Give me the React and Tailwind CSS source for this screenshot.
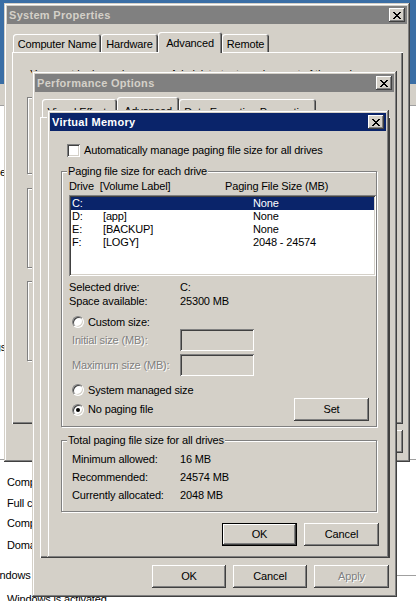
import React from "react";

const FONT = "font-['Liberation_Sans',Arial,sans-serif]";
const RAISED_WIN =
  "shadow-[inset_-1px_-1px_0_#404040,inset_1px_1px_0_#d4d0c8,inset_-2px_-2px_0_#808080,inset_2px_2px_0_#ffffff]";
const RAISED_BTN =
  "shadow-[inset_-1px_-1px_0_#404040,inset_1px_1px_0_#ffffff,inset_-2px_-2px_0_#808080]";
const SUNKEN =
  "shadow-[inset_1px_1px_0_#808080,inset_-1px_-1px_0_#ffffff,inset_2px_2px_0_#404040,inset_-2px_-2px_0_#d4d0c8]";
const PANEL =
  "shadow-[inset_1px_1px_0_#ffffff,inset_-1px_-1px_0_#404040,inset_-2px_-2px_0_#808080]";
const TAB =
  "shadow-[inset_1px_1px_0_#ffffff,inset_-1px_0_0_#404040,inset_-2px_0_0_#808080]";
const ETCHED =
  "border border-[#808080] shadow-[1px_1px_0_#ffffff,inset_1px_1px_0_#ffffff]";
const DISABLED = "text-[#808080] [text-shadow:1px_1px_0_#ffffff]";


function CloseButton() {
  return (
    <div className={`flex h-[14px] w-[16px] items-center justify-center bg-[#d4d0c8] ${RAISED_BTN}`}>
      <svg width="8" height="7" viewBox="0 0 8 7" shapeRendering="crispEdges">
        <path
          d="M0 0h2v1H0zM6 0h2v1H6zM1 1h2v1H1zM5 1h2v1H5zM2 2h4v1H2zM3 3h2v1H3zM2 4h4v1H2zM1 5h2v1H1zM5 5h2v1H5zM0 6h2v1H0zM6 6h2v1H6z"
          fill="#000"
        />
      </svg>
    </div>
  );
}


function Window({ title, active, className, children }) {
  return (
    <div className={`absolute flex flex-col bg-[#d4d0c8] p-[3px] ${RAISED_WIN} ${className}`}>
      <div
        className={`flex h-[18px] shrink-0 items-center justify-between pl-[2px] pr-[2px] ${
          active ? "bg-[#0a246a] text-white" : "bg-[#808080] text-[#d4d0c8]"
        }`}
      >
        <span className="text-[11px] font-bold leading-[13px] tracking-[0.3px]">{title}</span>
        <CloseButton />
      </div>
      {children}
    </div>
  );
}


// selPad / pad push the tab caption down inside the tab
function Tabs({ tabs, className, selPad, pad }) {
  return (
    <div className={`relative z-10 flex items-end ${className}`}>
      {tabs.map((tab) =>
        tab.active ? (
          <div
            key={tab.label}
            className={`-mb-px flex h-[21px] items-start justify-center rounded-t-[3px] bg-[#d4d0c8] ${selPad} ${TAB} ${tab.w}`}
          >
            {tab.label}
          </div>
        ) : (
          <div
            key={tab.label}
            className={`flex h-[18px] items-start justify-center overflow-hidden rounded-t-[3px] ${pad} ${TAB} ${tab.w}`}
          >
            {tab.label}
          </div>
        )
      )}
    </div>
  );
}


function Button({ children, isDefault, disabled, className = "" }) {
  return (
    <div
      className={`flex h-[23px] items-center justify-center bg-[#d4d0c8] ${
        isDefault ? "border border-black" : ""
      } ${RAISED_BTN} ${disabled ? DISABLED : ""} ${className}`}
    >
      {children}
    </div>
  );
}


function Radio({ checked }) {
  return (
    <span className="flex h-[12px] w-[12px] shrink-0 items-center justify-center rounded-full border border-t-[#808080] border-l-[#808080] border-r-white border-b-white bg-white shadow-[inset_1px_1px_0_#404040,inset_-1px_-1px_0_#d4d0c8]">
      {checked && <span className="h-[4px] w-[4px] rounded-full bg-black" />}
    </span>
  );
}


function Group({ label, className, children }) {
  return (
    <fieldset className={`${ETCHED} ${className}`}>
      <legend className="ml-[5px] bg-[#d4d0c8] px-[1px] leading-[13px]">{label}</legend>
      {children}
    </fieldset>
  );
}


const drives = [
  { drive: "C:", label: "", size: "None", selected: true },
  { drive: "D:", label: "[app]", size: "None" },
  { drive: "E:", label: "[BACKUP]", size: "None" },
  { drive: "F:", label: "[LOGY]", size: "2048 - 24574" },
];


function VirtualMemory() {
  return (
    <Window title="Virtual Memory" active className="left-[47px] top-[110px] z-30 h-[448px] w-[342px]">

      <div className="ml-[17px] mt-[13px] flex h-[13px] items-center gap-[4px]">
        <span className={`h-[13px] w-[13px] bg-white ${SUNKEN}`} />
        <span>Automatically manage paging file size for all drives</span>
      </div>

      <Group label="Paging file size for each drive" className="ml-[11px] mt-[8px] w-[316px] pb-[5px]">
        <div className="flex flex-col">

          <div className="ml-[7px] mt-[2px] flex h-[13px] items-center">
            <span className="w-[156px]">Drive&nbsp;&nbsp;[Volume Label]</span>
            <span>Paging File Size (MB)</span>
          </div>

          <div className={`ml-[7px] mt-[2px] h-[81px] w-[307px] bg-white p-[2px] ${SUNKEN}`}>
            {drives.map((d) => (
              <div
                key={d.drive}
                className={`flex h-[13px] items-center pl-[1px] ${
                  d.selected ? "bg-[#0a246a] text-white" : "text-black"
                }`}
              >
                <span className="w-[31px]">{d.drive}</span>
                <span className="w-[150px]">{d.label}</span>
                <span>{d.size}</span>
              </div>
            ))}
          </div>

          <div className="ml-[7px] mt-[4px] flex h-[14px] items-center">
            <span className="w-[111px]">Selected drive:</span>
            <span>C:</span>
          </div>
          <div className="ml-[7px] flex h-[14px] items-center">
            <span className="w-[111px]">Space available:</span>
            <span>25300 MB</span>
          </div>

          <div className="ml-[10px] mt-[7px] flex h-[14px] items-center gap-[4px]">
            <Radio />
            <span>Custom size:</span>
          </div>
          <div className="ml-[10px] flex h-[22px] items-center">
            <span className={`w-[108px] ${DISABLED}`}>Initial size (MB):</span>
            <span className={`h-[22px] w-[74px] bg-[#d4d0c8] ${SUNKEN}`} />
          </div>
          <div className="ml-[10px] mt-[3px] flex h-[22px] items-center">
            <span className={`w-[108px] ${DISABLED}`}>Maximum size (MB):</span>
            <span className={`h-[22px] w-[74px] bg-[#d4d0c8] ${SUNKEN}`} />
          </div>

          <div className="ml-[10px] mt-[7px] flex h-[14px] items-center gap-[4px]">
            <Radio />
            <span>System managed size</span>
          </div>
          <div className="ml-[10px] mr-[7px] mt-[1px] flex h-[23px] items-center justify-between">
            <div className="flex items-center gap-[4px]">
              <Radio checked />
              <span>No paging file</span>
            </div>
            <Button className="w-[75px]">Set</Button>
          </div>

        </div>
      </Group>

      <Group label="Total paging file size for all drives" className="ml-[11px] mt-[7px] w-[316px] pb-[7px]">
        <div className="ml-[10px] mt-[3px] flex flex-col">
          <div className="flex h-[18px] items-center">
            <span className="w-[108px]">Minimum allowed:</span>
            <span>16 MB</span>
          </div>
          <div className="flex h-[18px] items-center">
            <span className="w-[108px]">Recommended:</span>
            <span>24574 MB</span>
          </div>
          <div className="flex h-[18px] items-center">
            <span className="w-[108px]">Currently allocated:</span>
            <span>2048 MB</span>
          </div>
        </div>
      </Group>

      <div className="mr-[7px] mt-[11px] flex justify-end gap-[7px]">
        <Button isDefault className="w-[75px]">OK</Button>
        <Button className="w-[75px]">Cancel</Button>
      </div>

    </Window>
  );
}


function PerformanceOptions() {
  return (
    <Window title="Performance Options" className="left-[32px] top-[71px] z-20 h-[526px] w-[365px]">
      <Tabs
        className="ml-[7px] mt-[5px]"
        selPad="pt-[6px]"
        pad="pt-[5px]"
        tabs={[
          { label: "Visual Effects", w: "w-[75px]" },
          { label: "Advanced", w: "w-[62px]", active: true },
          { label: "Data Execution Prevention", w: "w-[137px]" },
        ]}
      />
      <div className={`ml-[5px] h-[441px] w-[350px] bg-[#d4d0c8] ${PANEL}`} />
      <div className="mr-[5px] mt-[7px] flex justify-end gap-[7px]">
        <Button className="w-[74px]">OK</Button>
        <Button className="w-[74px]">Cancel</Button>
        <Button disabled className="w-[75px]">Apply</Button>
      </div>
    </Window>
  );
}


function SystemProperties() {
  return (
    <Window title="System Properties" className="left-[4px] top-[3px] z-10 h-[459px] w-[406px]">
      <Tabs
        className="ml-[6px] mt-[8px]"
        selPad="pt-[3px]"
        pad="pt-[2px]"
        tabs={[
          { label: "Computer Name", w: "w-[88px]" },
          { label: "Hardware", w: "w-[57px]" },
          { label: "Advanced", w: "w-[64px]", active: true },
          { label: "Remote", w: "w-[47px]" },
        ]}
      />
      <div className={`ml-[5px] flex h-[372px] w-[391px] flex-col bg-[#d4d0c8] ${PANEL}`}>
        <p className="ml-[18px] mt-[16px] leading-[13px]">
          You must be logged on as an Administrator to make most of these changes.
        </p>
        <Group label="Performance" className="ml-[15px] mt-[10px] h-[83px] w-[363px]" />
        <Group label="User Profiles" className="ml-[15px] mt-[8px] h-[86px] w-[363px]" />
        <Group label="Startup and Recovery" className="ml-[15px] mt-[7px] h-[86px] w-[363px]" />
      </div>
      <div className="mr-[4px] mt-[6px] flex justify-end gap-[6px]">
        <Button className="w-[75px]">OK</Button>
        <Button className="w-[75px]">Cancel</Button>
        <Button className="w-[75px]">Apply</Button>
      </div>
    </Window>
  );
}


function BackgroundWindow() {
  return (
    <div className="absolute left-0 top-[84px] flex h-[517px] w-[416px] flex-col bg-white leading-[13px]">
      <div className="h-[22px] shrink-0 border-b border-[#a0a0a0] bg-[#d4d0c8]" />
      <div className="-ml-[60px] mt-[60px] w-[66px] text-right">Name</div>
      <div className="-ml-[60px] mt-[162px] w-[66px] text-right">Settings</div>
      <div className="mt-[105px] h-px shrink-0 bg-[#a0a0a0]" />
      <div className="ml-[7px] mt-[16px]">Computer name:</div>
      <div className="ml-[7px] mt-[8px]">Full computer name:</div>
      <div className="ml-[7px] mt-[7px]">Computer description:</div>
      <div className="ml-[7px] mt-[9px]">Domain:</div>
      <div className="-ml-[13px] mt-[17px] flex items-center">
        <span>Windows activation</span>
        <span className="ml-[6px] h-px flex-1 bg-[#a0a0a0]" />
      </div>
      <div className="ml-[7px] mt-[11px]">Windows is activated</div>
    </div>
  );
}


export default function App() {
  return (
    <div className={`relative h-[601px] w-[416px] overflow-hidden bg-[#3a6ea5] text-[11px] tracking-[-0.15px] text-black ${FONT}`}>
      <BackgroundWindow />
      <SystemProperties />
      <PerformanceOptions />
      <VirtualMemory />
    </div>
  );
}
